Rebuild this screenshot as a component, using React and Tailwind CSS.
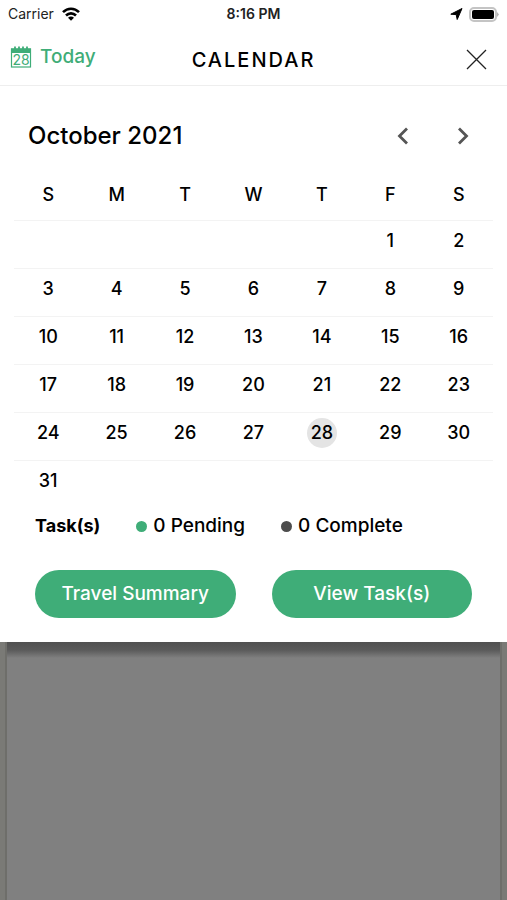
import React, { useState } from "react";

const weekdays = ["S", "M", "T", "W", "T", "F", "S"];
const months = [
  "January", "February", "March", "April", "May", "June",
  "July", "August", "September", "October", "November", "December",
];

const getWeeks = (year, month) => {
  const firstDay = new Date(year, month, 1).getDay();
  const totalDays = new Date(year, month + 1, 0).getDate();
  const cells = Array(firstDay).fill(null);
  for (let d = 1; d <= totalDays; d++) cells.push(d);
  while (cells.length % 7 !== 0) cells.push(null);

  const weeks = [];
  for (let i = 0; i < cells.length; i += 7) weeks.push(cells.slice(i, i + 7));
  return weeks;
};

function StatusBar() {
  return (
    <div className="grid h-7 grid-cols-3 items-center px-2 text-sm text-[#222]">
      <div className="flex items-center gap-2">
        <span>Carrier</span>
        <svg width="18" height="14" viewBox="0 0 18 14" fill="none" stroke="#000" strokeWidth="2.6">
          <path d="M1 5.2C5.6 .6 12.4 .6 17 5.2" />
          <path d="M4 8.5C6.9 5.6 11.1 5.6 14 8.5" />
          <path d="M9 13.8L6 10.8C7.7 9.2 10.3 9.2 12 10.8Z" fill="#000" stroke="none" />
        </svg>
      </div>
      <span className="text-center font-semibold">8:16 PM</span>
      <div className="flex items-center justify-end gap-1.5">
        <svg width="13" height="12" viewBox="0 0 13 12" fill="#000">
          <path d="M12 .5L7.2 11.5L6.2 6.6L.8 6.2Z" stroke="#000" strokeLinejoin="round" />
        </svg>
        <svg width="30" height="15" viewBox="0 0 30 15">
          <rect x="1" y="1" width="26" height="13" rx="4" fill="#fff" stroke="#c4c4c4" strokeWidth="2" />
          <rect x="3" y="3" width="22" height="9" rx="2" fill="#000" />
          <path d="M28 5L30 7.5L28 10Z" fill="#b5b5b5" />
        </svg>
      </div>
    </div>
  );
}

function Header({ onToday }) {
  return (
    <header className="flex h-[58px] items-center justify-between border-b border-[#eeeeee] px-2.5">
      <div className="flex-1">
        <button type="button" onClick={onToday} className="flex items-center gap-2 text-[19px] leading-6 font-medium text-[#3fad78]">
          <svg width="22" height="22" viewBox="0 0 22 22">
            <rect x="1.5" y="3" width="19" height="18" fill="#fff" stroke="#3fad78" strokeWidth="1.2" />
            <path d="M1 2.5H21V7H1Z" fill="#3fad78" />
            <path d="M5 .5V3M9 .5V3M13 .5V3M17 .5V3" stroke="#3fad78" strokeWidth="1.8" />
            <text x="11" y="19" textAnchor="middle" fontSize="14" fontWeight="400" fill="#3fad78">28</text>
          </svg>
          Today
        </button>
      </div>
      <h1 className="pt-1.5 text-xl leading-6 font-medium tracking-widest">CALENDAR</h1>
      <div className="flex flex-1 justify-end pt-1.5">
        <button type="button" aria-label="Close" className="mr-2.5">
          <svg width="21" height="21" viewBox="0 0 21 21" stroke="#222" strokeWidth="1.3">
            <path d="M1 1L20 20M20 1L1 20" />
          </svg>
        </button>
      </div>
    </header>
  );
}

function App() {
  const [view, setView] = useState({ year: 2021, month: 9 });
  const weeks = getWeeks(view.year, view.month);

  const changeMonth = (step) => {
    const next = new Date(view.year, view.month + step, 1);
    setView({ year: next.getFullYear(), month: next.getMonth() });
  };

  const isToday = (day) => day === 28 && view.month === 9 && view.year === 2021;

  return (
    <div className="flex min-h-screen flex-col bg-[#808080] font-['Inter',sans-serif] text-black">
      <main className="bg-white">
        <StatusBar />
        <Header onToday={() => setView({ year: 2021, month: 9 })} />

        <div className="flex items-center justify-between pt-9 pr-8 pb-[22px] pl-7">
          <h2 className="text-2xl leading-7 font-medium">
            {months[view.month]} {view.year}
          </h2>
          <div className="flex gap-9">
            <button type="button" aria-label="Previous month" onClick={() => changeMonth(-1)}>
              <svg width="24" height="24" viewBox="0 0 24 24" fill="none" stroke="#555" strokeWidth="2.8">
                <path d="M16 4.5L8.5 12L16 19.5" />
              </svg>
            </button>
            <button type="button" aria-label="Next month" onClick={() => changeMonth(1)}>
              <svg width="24" height="24" viewBox="0 0 24 24" fill="none" stroke="#555" strokeWidth="2.8">
                <path d="M8 4.5L15.5 12L8 19.5" />
              </svg>
            </button>
          </div>
        </div>

        <div className="px-3.5">
          <table className="w-full table-fixed border-collapse text-center text-lg leading-6 font-medium">
            <thead>
              <tr>
                {weekdays.map((name, i) => (
                  <th key={i} scope="col" className="h-12 p-0 pb-0.5 font-medium">{name}</th>
                ))}
              </tr>
            </thead>
            <tbody>
              {weeks.map((week, i) => (
                <tr key={i} className="border-t border-[#f3f3f3]">
                  {week.map((day, j) => (
                    <td key={j} className="h-12 p-0 pb-1.5">
                      {day && (
                        <button
                          type="button"
                          className={isToday(day) ? "size-[30px] rounded-full bg-[#e4e4e4]" : "size-[30px] rounded-full"}
                        >
                          {day}
                        </button>
                      )}
                    </td>
                  ))}
                </tr>
              ))}
            </tbody>
          </table>
        </div>

        <div className="flex items-center px-[35px] pt-1 text-[19px] leading-7 font-medium">
          <span className="mr-9 text-lg leading-7 font-bold">Task(s)</span>
          <span className="mr-9 flex items-center gap-1.5">
            <span className="size-[11px] rounded-full bg-[#3fad78]" />
            0 Pending
          </span>
          <span className="flex items-center gap-1.5">
            <span className="size-[11px] rounded-full bg-[#4d4d4d]" />
            0 Complete
          </span>
        </div>

        <div className="grid grid-cols-2 gap-9 px-[35px] pt-[30px] pb-6 text-[19px] font-medium text-white">
          <button type="button" className="h-12 rounded-full bg-[#3fad78]">Travel Summary</button>
          <button type="button" className="h-12 rounded-full bg-[#3fad78]">View Task(s)</button>
        </div>
      </main>

      <div className="flex flex-1 flex-col border-x-[5px] border-[#7a7a76]">
        <div className="flex-1 border-x-2 border-[#6e6e6a]">
          <div className="h-4 bg-linear-to-b from-[#505050] via-[#5a5a5a] to-[#808080]" />
        </div>
      </div>
    </div>
  );
}

export default App;
